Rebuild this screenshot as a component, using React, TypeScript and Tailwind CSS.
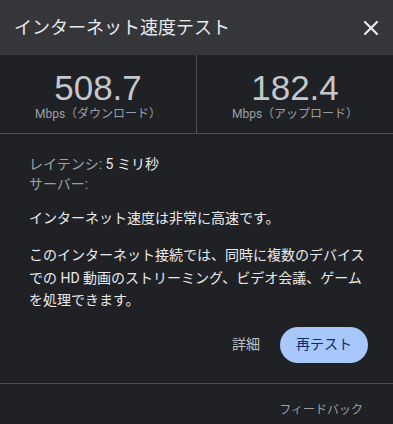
import React from 'react';

const font = { fontFamily: 'Roboto, "Noto Sans CJK JP", sans-serif' };

export default function App() {
  return (
    <div
      className="w-[393px] h-[424px] bg-[#202124] overflow-hidden text-[#e8eaed] font-['Roboto','Noto_Sans_CJK_JP',sans-serif]"
    >
      {/* header */}
      <div className="h-[55px] bg-[#35363a] flex items-center justify-between pl-[14px] pr-[15px]">
        <span className="text-[18px] leading-none text-[#e8eaed]">インターネット速度テスト</span>
        <svg width="14" height="14" viewBox="0 0 14 14" className="mt-[1px]">
          <path d="M1 1 L13 13 M13 1 L1 13" stroke="#e8eaed" strokeWidth="2.2" strokeLinecap="square" />
        </svg>
      </div>

      {/* speeds */}
      <div className="h-[79px] flex border-b border-[#4d5054]">
        <div className="flex-1 flex flex-col items-center pt-[15px] border-r border-[#4d5054]">
          <span className="text-[35px] leading-[36px] text-[#c4c7cc] font-['Liberation_Sans',Arial,sans-serif]">508.7</span>
          <span className="text-[12px] leading-[16px] text-[#9aa0a6]">Mbps（ダウンロード）</span>
        </div>
        <div className="flex-1 flex flex-col items-center pt-[15px]">
          <span className="text-[35px] leading-[36px] text-[#c4c7cc] font-['Liberation_Sans',Arial,sans-serif]">182.4</span>
          <span className="text-[12px] leading-[16px] text-[#9aa0a6]">Mbps（アップロード）</span>
        </div>
      </div>

      {/* details */}
      <div className="pl-[29px] pr-[20px] pt-[20px] text-[14px]">
        <div className="leading-[20px]">
          <span className="text-[#9aa0a6]">レイテンシ: </span>
          <span className="text-[#e8eaed]">5 ミリ秒</span>
        </div>
        <div className="leading-[20px] text-[#9aa0a6]">サーバー:</div>
        <p className="mt-[13px] leading-[22px]">インターネット速度は非常に高速です。</p>
        <p className="mt-[15px] leading-[22.5px] whitespace-nowrap">
          このインターネット接続では、同時に複数のデバイス
          <br />
          での HD 動画のストリーミング、ビデオ会議、ゲーム
          <br />
          を処理できます。
        </p>
      </div>

      {/* actions */}
      <div className="flex justify-end items-center gap-[20px] pr-[25px] mt-[15px]">
        <span className="text-[14px] text-[#bdc1c6]">詳細</span>
        <button className="h-[36px] w-[88px] rounded-full bg-[#a8c7fa] text-[#062e6f] text-[14px]">
          再テスト
        </button>
      </div>

      <div className="mt-[20px] border-t border-[#4d5054] flex justify-end pr-[30px] pt-[18px]">
        <span className="text-[12px] leading-[16px] text-[#9aa0a6]" style={font}>フィードバック</span>
      </div>
    </div>
  );
}
